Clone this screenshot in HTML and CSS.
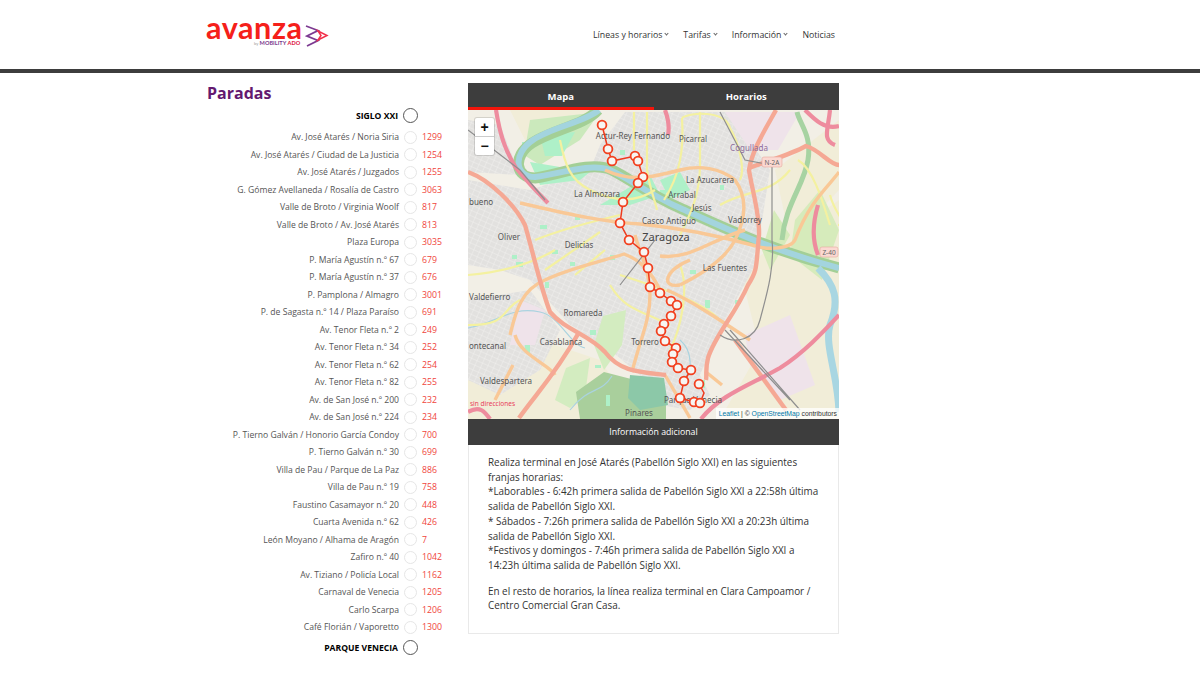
FILE: index.html
```html
<!DOCTYPE html>
<html lang="es">
<head>
<meta charset="utf-8">
<title>Paradas</title>
<link rel="stylesheet" href="styles.css">
</head>
<body>
<header class="site-header">
  <div class="header-inner">
    <a class="logo">
      <span class="logo-word">avanza</span>
      <span class="logo-by"><small>by</small> MOBILITY <b>ADO</b></span>
      <svg class="logo-mark" viewBox="0 0 24 24" aria-hidden="true">
        <polyline class="mark-purple" points="1,2 13,6.5 2,12 13,16.5 2,22"/>
        <polygon class="mark-red" points="13,7 22,11.5 13,16 16,11.5"/>
      </svg>
    </a>
    <nav class="main-nav">
      <a>Líneas y horarios<i class="caret"></i></a>
      <a>Tarifas<i class="caret"></i></a>
      <a>Información<i class="caret"></i></a>
      <a>Noticias</a>
    </nav>
  </div>
</header>
<main class="content">
  <section class="stops">
    <h1>Paradas</h1>
    <div class="terminal first"><span>SIGLO XXI</span><i></i></div>
    <ol class="stop-list">
      <li><span>Av. José Atarés / Noria Siria</span><i></i><b>1299</b></li>
      <li><span>Av. José Atarés / Ciudad de La Justicia</span><i></i><b>1254</b></li>
      <li><span>Av. José Atarés / Juzgados</span><i></i><b>1255</b></li>
      <li><span>G. Gómez Avellaneda / Rosalía de Castro</span><i></i><b>3063</b></li>
      <li><span>Valle de Broto / Virginia Woolf</span><i></i><b>817</b></li>
      <li><span>Valle de Broto / Av. José Atarés</span><i></i><b>813</b></li>
      <li><span>Plaza Europa</span><i></i><b>3035</b></li>
      <li><span>P. María Agustín n.º 67</span><i></i><b>679</b></li>
      <li><span>P. María Agustín n.º 37</span><i></i><b>676</b></li>
      <li><span>P. Pamplona / Almagro</span><i></i><b>3001</b></li>
      <li><span>P. de Sagasta n.º 14 / Plaza Paraíso</span><i></i><b>691</b></li>
      <li><span>Av. Tenor Fleta n.º 2</span><i></i><b>249</b></li>
      <li><span>Av. Tenor Fleta n.º 34</span><i></i><b>252</b></li>
      <li><span>Av. Tenor Fleta n.º 62</span><i></i><b>254</b></li>
      <li><span>Av. Tenor Fleta n.º 82</span><i></i><b>255</b></li>
      <li><span>Av. de San José n.º 200</span><i></i><b>232</b></li>
      <li><span>Av. de San José n.º 224</span><i></i><b>234</b></li>
      <li><span>P. Tierno Galván / Honorio García Condoy</span><i></i><b>700</b></li>
      <li><span>P. Tierno Galván n.º 30</span><i></i><b>699</b></li>
      <li><span>Villa de Pau / Parque de La Paz</span><i></i><b>886</b></li>
      <li><span>Villa de Pau n.º 19</span><i></i><b>758</b></li>
      <li><span>Faustino Casamayor n.º 20</span><i></i><b>448</b></li>
      <li><span>Cuarta Avenida n.º 62</span><i></i><b>426</b></li>
      <li><span>León Moyano / Alhama de Aragón</span><i></i><b>7</b></li>
      <li><span>Zafiro n.º 40</span><i></i><b>1042</b></li>
      <li><span>Av. Tiziano / Policía Local</span><i></i><b>1162</b></li>
      <li><span>Carnaval de Venecia</span><i></i><b>1205</b></li>
      <li><span>Carlo Scarpa</span><i></i><b>1206</b></li>
      <li><span>Café Florián / Vaporetto</span><i></i><b>1300</b></li>
    </ol>
    <div class="terminal last"><span>PARQUE VENECIA</span><i></i></div>
  </section>
  <section class="detail">
    <div class="tabs">
      <a class="tab active">Mapa</a>
      <a class="tab">Horarios</a>
    </div>
    <div class="map">
      <svg class="map-art" viewBox="468 110 371 309" aria-label="Mapa de la línea">
        <defs>
          <pattern id="streets" width="6" height="5" patternUnits="userSpaceOnUse" patternTransform="rotate(24)">
            <rect width="6" height="5" fill="#e2e1df"/>
            <path d="M0 0H6M0 0V5" stroke="#f4f3f0" stroke-width=".8"/>
          </pattern>
        </defs>
        <rect x="468" y="110" width="371" height="309" fill="#f2efe6"/>
        <!-- land use -->
        <path class="farm" d="M740 270L839 200V419H720L760 350Z"/>
        <path class="farm" d="M468 360L540 340L600 360L640 419H468Z"/>
        <path class="farm" d="M510 110H590L580 135L530 150Z"/>
        <path class="farm" d="M775 170L839 120V190L790 240Z"/>
        <path class="urban" d="M468 180L530 190L590 170L600 145L625 112H730L770 170L755 265L720 330L700 375L710 395L690 410L660 405L640 375L610 350L570 325L530 280L500 270L468 265Z"/>
        <path class="urban" d="M468 300L530 290L560 330L540 370L500 395L468 380Z"/>
        <path class="urban" d="M468 120L500 125L520 175L468 172Z"/>
        <path class="pink" d="M725 112H800L778 150L750 150Z"/>
        <path class="pink" d="M520 300L545 310L535 345L510 345Z"/>
        <path class="pink" d="M745 335L790 315L815 385L780 400L750 365Z"/>
        <path class="meadow" d="M795 220L820 190L839 230L822 280L790 255Z"/>
        <path class="meadow" d="M774 210L790 235L770 270L762 250Z"/>
        <path class="park" d="M530 120L600 112L580 140L540 165L524 155Z"/>
        <path class="park-pale" d="M603 316L626 310L622 345L604 370L594 345Z"/>
        <path class="park-pale" d="M566 368L590 358L585 395L570 408L555 400Z"/>
        <path class="park-b" d="M576 392L604 372L635 380L666 400L666 419H580Z"/>
        <path class="park-c" d="M630 375L664 378L668 405L640 410L628 398Z"/>
        <path class="park-d" d="M600 205L650 175L660 195L630 205Z"/>
        <path class="park-d" d="M660 180L680 172L690 190L670 200Z"/>
        <path class="park-d" d="M530 162L590 172L580 180L540 185Z"/>
        <path class="park-d" d="M540 135L575 132L562 156L545 156Z"/>
        <g class="park-d">
          <rect x="522" y="142" width="5" height="4"/><rect x="516" y="262" width="7" height="5"/><rect x="545" y="282" width="4" height="6"/>
          <rect x="570" y="262" width="5" height="4"/><rect x="552" y="250" width="6" height="4"/><rect x="610" y="255" width="5" height="5"/>
          <rect x="690" y="270" width="6" height="4"/><rect x="705" y="300" width="5" height="8"/><rect x="735" y="300" width="6" height="4"/>
          <rect x="590" y="330" width="6" height="5"/><rect x="525" y="345" width="5" height="8"/><rect x="595" y="365" width="6" height="3"/>
          <rect x="720" y="185" width="4" height="5"/><rect x="690" y="215" width="6" height="3"/><rect x="660" y="190" width="6" height="8"/>
          <rect x="620" y="150" width="5" height="5"/><rect x="700" y="380" width="5" height="8"/><rect x="606" y="395" width="4" height="11"/>
          <rect x="540" y="225" width="7" height="4"/><rect x="512" y="255" width="5" height="4"/><rect x="575" y="215" width="5" height="5"/>
        </g>
        <!-- rivers -->
        <path class="river-bank" d="M598 110C585 125 552 130 532 143C512 156 515 178 535 178C555 176 590 160 612 170C632 180 650 195 680 208C720 226 770 250 839 268"/>
        <path class="river" d="M599 110C585 122 552 127 533 140C512 154 515 177 535 177C556 175 590 162 610 170C632 180 650 195 680 208C720 226 770 250 839 268"/>
        <path class="canal" d="M468 328C500 322 510 306 540 312C560 316 570 345 585 348"/>
        <path class="river-thin" d="M797 112C800 125 812 135 808 160C804 185 785 205 782 240"/>
        <path class="river-wide" d="M818 268C835 285 840 300 830 325C824 345 838 375 839 412"/>
        <path class="canal" d="M570 410C590 385 600 395 612 376"/>
        <path class="canal" d="M680 340C692 350 695 375 680 380"/>
        <!-- yellow roads -->
        <g class="secondary">
          <path d="M560 140C565 165 570 180 590 190C620 205 640 200 655 190"/>
          <path d="M634 112V150M647 112V170C650 190 655 200 657 210"/>
          <path d="M682 118C690 112 725 110 730 128C740 145 745 170 740 180"/>
          <path d="M682 118C684 150 680 175 664 200"/>
          <path d="M700 112V165C700 195 690 215 680 235"/>
          <path d="M535 240C560 230 590 222 620 215"/>
          <path d="M468 275C500 272 530 265 555 250"/>
          <path d="M545 270L600 232M575 275L605 250"/>
          <path d="M620 275C660 288 700 300 720 320"/>
          <path d="M680 265C690 290 680 330 670 350"/>
          <path d="M610 285C625 310 640 310 670 325"/>
          <path d="M468 325C510 325 500 310 520 300"/>
          <path d="M720 205C745 190 770 195 790 170"/>
          <path d="M798 160C815 170 825 210 830 225"/>
          <path d="M830 195C835 215 850 225 838 225"/>
        </g>
        <!-- orange roads -->
        <g class="tertiary">
          <path d="M520 203C560 212 600 222 640 224C680 228 720 236 756 246"/>
          <path d="M605 170C630 182 650 178 680 170C700 165 720 168 735 180C748 198 745 220 735 240C725 260 700 275 680 285"/>
          <path d="M660 290C650 270 640 260 624 254C600 262 570 268 545 280C520 290 515 315 510 335"/>
          <path d="M635 235C640 255 650 270 650 295C650 320 640 340 632 372"/>
          <path d="M660 256C690 260 710 240 745 230"/>
          <path d="M667 290C690 300 720 320 750 340"/>
          <path d="M680 285C660 288 665 270 690 260"/>
          <path d="M515 335C520 355 550 365 555 375"/>
          <path d="M513 365L495 400"/>
          <path d="M706 372L722 385"/>
          <path d="M665 375L690 418"/>
          <path d="M756 245C760 250 790 250 795 240C810 200 830 185 839 172"/>
        </g>
        <!-- trunk roads -->
        <g class="trunk">
          <path d="M776 110C765 130 752 150 749 170C752 190 760 215 759 235C756 265 758 270 748 285C735 315 715 335 708 358C705 370 707 375 706 380"/>
          <path d="M749 168C770 160 790 155 806 146C820 150 830 165 839 165"/>
          <path d="M468 172C490 180 515 205 525 225C535 260 540 285 550 312C565 330 590 335 605 352C620 372 640 372 666 375"/>
          <path d="M519 418C535 395 555 375 578 334"/>
          <path d="M735 340L786 410"/>
        </g>
        <g class="motorway">
          <path d="M496 110C500 135 505 150 516 168C530 185 540 195 548 203"/>
          <path d="M665 110C668 118 670 125 668 135"/>
          <path d="M805 110C815 120 825 130 839 126M830 110C828 130 822 140 835 145"/>
          <path d="M701 419C720 395 750 385 780 368C805 352 825 330 839 315"/>
          <path d="M468 412C480 405 485 412 490 419"/>
          <path d="M818 205C812 225 812 240 818 255"/>
        </g>
        <path class="rail" d="M468 130L520 170L545 200M720 112L745 160L772 165L772 240C775 270 765 300 760 320C755 340 735 345 720 335"/>
        <path class="rail" d="M725 330L790 400M730 330L800 410M620 285L655 240"/>
        <!-- labels -->
        <g class="labels">
          <text x="633" y="139" text-anchor="middle">Actur-Rey Fernando</text>
          <text x="693" y="142" text-anchor="middle">Picarral</text>
          <text class="lbl-purple" x="749" y="151" text-anchor="middle">Cogullada</text>
          <text x="710" y="183" text-anchor="middle">La Azucarera</text>
          <text x="597" y="197" text-anchor="middle">La Almozara</text>
          <text x="682" y="198" text-anchor="middle">Arrabal</text>
          <text x="702" y="211" text-anchor="middle">Jesús</text>
          <text x="669" y="224" text-anchor="middle">Casco Antiguo</text>
          <text x="745" y="223" text-anchor="middle">Vadorrey</text>
          <text x="509" y="240" text-anchor="middle">Oliver</text>
          <text x="579" y="248" text-anchor="middle">Delicias</text>
          <text class="lbl-big" x="666" y="241" text-anchor="middle">Zaragoza</text>
          <text x="469" y="205">bueno</text>
          <text x="725" y="271" text-anchor="middle">Las Fuentes</text>
          <text x="469" y="300">Valdefierro</text>
          <text x="583" y="316" text-anchor="middle">Romareda</text>
          <text x="561" y="345" text-anchor="middle">Casablanca</text>
          <text x="645" y="345" text-anchor="middle">Torrero</text>
          <text x="469" y="349">ontecanal</text>
          <text x="506" y="384" text-anchor="middle">Valdespartera</text>
          <text x="693" y="403" text-anchor="middle">Parque Venecia</text>
          <text x="639" y="416" text-anchor="middle">Pinares</text>
          <text class="lbl-red" x="470" y="406">sin direcciones</text>
        </g>
        <g class="shield">
          <rect x="762" y="157" width="20" height="10" rx="2"/>
          <text x="772" y="165" text-anchor="middle">N-2A</text>
          <rect x="820" y="247" width="18" height="10" rx="2"/>
          <text x="829" y="255" text-anchor="middle">Z-40</text>
        </g>
        <!-- route -->
        <polyline class="route" points="602,125 608,149 612,161 635,156 638,161 643,177 638,183 623,202 620,223 629,240 644,252 648,268 650,287 660,293 671,301 677,305 671,316 664,324 661,331 665,341 676,348 673,354 672,362 678,368 691,370 684,381 680,398 694,402 700,403 704,393 699,384"/>
        <g class="markers">
          <circle cx="602" cy="125" r="4.4"/><circle cx="608" cy="149" r="4.4"/><circle cx="612" cy="161" r="4.4"/>
          <circle cx="635" cy="156" r="4.4"/><circle cx="638" cy="161" r="4.4"/><circle cx="643" cy="177" r="4.4"/>
          <circle cx="638" cy="183" r="4.4"/><circle cx="623" cy="202" r="4.4"/><circle cx="620" cy="223" r="4.4"/>
          <circle cx="629" cy="240" r="4.4"/><circle cx="644" cy="252" r="4.4"/><circle cx="648" cy="268" r="4.4"/>
          <circle cx="650" cy="287" r="4.4"/><circle cx="660" cy="293" r="4.4"/><circle cx="671" cy="301" r="4.4"/>
          <circle cx="677" cy="305" r="4.4"/><circle cx="671" cy="316" r="4.4"/><circle cx="664" cy="324" r="4.4"/>
          <circle cx="661" cy="331" r="4.4"/><circle cx="665" cy="341" r="4.4"/><circle cx="676" cy="348" r="4.4"/>
          <circle cx="673" cy="354" r="4.4"/><circle cx="672" cy="362" r="4.4"/><circle cx="678" cy="368" r="4.4"/>
          <circle cx="691" cy="370" r="4.4"/><circle cx="684" cy="381" r="4.4"/><circle cx="699" cy="384" r="4.4"/>
          <circle cx="680" cy="398" r="4.4"/><circle cx="694" cy="402" r="4.4"/><circle cx="700" cy="403" r="4.4"/>
        </g>
      </svg>
      <div class="zoom-control"><span>+</span><span>−</span></div>
      <div class="attribution"><a>Leaflet</a> | © <a>OpenStreetMap</a> contributors</div>
    </div>
    <div class="info-title">Información adicional</div>
    <div class="info-body">
      <p>Realiza terminal en José Atarés (Pabellón Siglo XXI) en las siguientes franjas horarias:<br>
      *Laborables - 6:42h primera salida de Pabellón Siglo XXI a 22:58h última salida de Pabellón Siglo XXI.<br>
      * Sábados - 7:26h primera salida de Pabellón Siglo XXI a 20:23h última salida de Pabellón Siglo XXI.<br>
      *Festivos y domingos - 7:46h primera salida de Pabellón Siglo XXI a 14:23h última salida de Pabellón Siglo XXI.</p>
      <p>En el resto de horarios, la línea realiza terminal en Clara Campoamor / Centro Comercial Gran Casa.</p>
    </div>
  </section>
</main>
</body>
</html>
```
FILE: styles.css
```css
* { box-sizing: border-box; }
html, body { margin: 0; padding: 0; height: 675px; overflow: hidden; background: #fff; }
body { font-family: "Open Sans", "Noto Sans", sans-serif; color: #444; }

.site-header { height: 73px; border-bottom: 4px solid #3d3d3d; }
.header-inner { width: 786px; height: 69px; margin: 0 auto; display: flex; justify-content: space-between; align-items: center; padding-right: 158px; }
.logo { position: relative; display: block; width: 122px; height: 46px; }
.logo-word { position: absolute; left: -1px; top: 3px; font: 700 30.5px/24px "Lato", sans-serif; color: #f5201a; letter-spacing: .6px; }
.logo-by { position: absolute; left: 47px; top: 28.5px; font: 700 5.6px/6px "Lato", sans-serif; color: #7a3a8c; white-space: nowrap; }
.logo-by small { font-size: 4px; font-weight: 400; color: #999; }
.logo-by b { color: #e0234a; }
.logo-mark { position: absolute; left: 98px; top: 12.5px; width: 24px; height: 24px; }
.mark-purple { fill: none; stroke: #7c3a91; stroke-width: 1.8; }
.mark-red { fill: none; stroke: #f2304a; stroke-width: 1.5; }

.main-nav { display: flex; gap: 15px; font-size: 8.75px; line-height: 12px; color: #333; }
.main-nav a { display: flex; align-items: center; white-space: nowrap; }
.caret { width: 3px; height: 3px; margin: 0 0 2px 3px; border-right: 1px solid #666; border-bottom: 1px solid #666; transform: rotate(45deg); }

.content { width: 786px; margin: 0 auto; display: flex; align-items: flex-start; padding-top: 10px; }
.stops { width: 261px; flex: none; }
.stops h1 { margin: 0; font-size: 16px; line-height: 20px; font-weight: 700; color: #64196f; }

.terminal { display: flex; justify-content: flex-end; align-items: center; width: 211px; height: 17.5px; font-size: 8.6px; font-weight: 700; color: #000; }
.terminal.first { margin-top: 4px; margin-bottom: 4px; }
.terminal.last { margin-top: 3px; }
.terminal i { flex: none; width: 15px; height: 15px; margin-left: 5px; border: 1px solid #555; border-radius: 50%; background: #fff; }

.stop-list { list-style: none; margin: 0; padding: 0; }
.stop-list li { display: flex; align-items: center; height: 17.5px; font-size: 8.6px; color: #555; }
.stop-list span { width: 192px; text-align: right; white-space: nowrap; }
.stop-list i { flex: none; width: 13px; height: 13px; margin-left: 5px; border: 1px solid #e6e6e6; border-radius: 50%; background: #fff; }
.stop-list b { margin-left: 5px; font-weight: 400; font-size: 8.75px; color: #f0443c; }

.detail { width: 371px; flex: none; }
.tabs { display: flex; height: 27px; background: #3d3d3d; }
.tab { flex: 1; text-align: center; color: #fff; font-size: 9.5px; font-weight: 700; line-height: 27px; }
.tab.active { border-bottom: 3px solid #f3150b; }

.map { position: relative; height: 309px; overflow: hidden; }
.map-art { display: block; width: 371px; height: 309px; }
.farm { fill: #f1edd8; }
.urban { fill: url(#streets); }
.pink { fill: #efe3ea; }
.meadow { fill: #d6ebbb; }
.park { fill: #cbe9bc; }
.park-pale { fill: #d3ecc0; }
.park-b { fill: #a9cf9c; }
.park-c { fill: #8cc8a8; }
.park-d { fill: #aef0c8; }
.river-bank { fill: none; stroke: #a3cf96; stroke-width: 11; }
.river { fill: none; stroke: #a3d4de; stroke-width: 6; }
.river-thin { fill: none; stroke: #a7d3a2; stroke-width: 5; }
.river-wide { fill: none; stroke: #a8d6e2; stroke-width: 7; }
.canal { fill: none; stroke: #aad3df; stroke-width: 1.2; }
.secondary path { fill: none; stroke: #f4f1a0; stroke-width: 2.2; }
.tertiary path { fill: none; stroke: #f9c896; stroke-width: 3.4; }
.trunk path { fill: none; stroke: #f5a894; stroke-width: 4.4; }
.motorway path { fill: none; stroke: #ee8c9e; stroke-width: 4.2; }
.rail { fill: none; stroke: #8f8f8f; stroke-width: 1.2; }
.labels text { font-family: "Noto Sans", "Open Sans", sans-serif; font-size: 8px; fill: #555; }
.labels .lbl-big { font-size: 11px; fill: #444; }
.labels .lbl-purple { fill: #8d6a9a; }
.labels .lbl-red { fill: #e8405a; font-size: 6.5px; }
.shield rect { fill: #fbd9d2; stroke: #e8a8a0; stroke-width: .6; }
.shield text { font-family: "Noto Sans", sans-serif; font-size: 6.5px; fill: #666; }
.route { fill: none; stroke: #ee3a1d; stroke-width: 1.5; }
.markers circle { fill: #f7f5f2; stroke: #f2401f; stroke-width: 1.8; }

.zoom-control { position: absolute; left: 7px; top: 8px; width: 19px; background: #fff; border-radius: 2px; box-shadow: 0 0 0 1px rgba(0,0,0,.12); }
.zoom-control span { display: block; height: 18.5px; text-align: center; font: 700 14px/18px "Liberation Sans", sans-serif; color: #111; }
.zoom-control span:first-child { border-bottom: 1px solid #ccc; }
.attribution { position: absolute; right: 0; bottom: 0; padding: 0 2px 0 3px; height: 11px; font: 400 6.8px/11px "Liberation Sans", sans-serif; color: #333; background: rgba(255,255,255,.75); white-space: nowrap; }
.attribution a { color: #0078a8; }

.info-title { height: 26px; background: #3d3d3d; color: #fff; text-align: center; font-size: 8.75px; line-height: 26px; }
.info-body { height: 189px; padding: 10px 15px 0 19px; border: 1px solid #e9e9e9; border-top: 0; font-size: 9.9px; line-height: 14.7px; color: #333; }
.info-body p { margin: 0 0 11px; }
```
